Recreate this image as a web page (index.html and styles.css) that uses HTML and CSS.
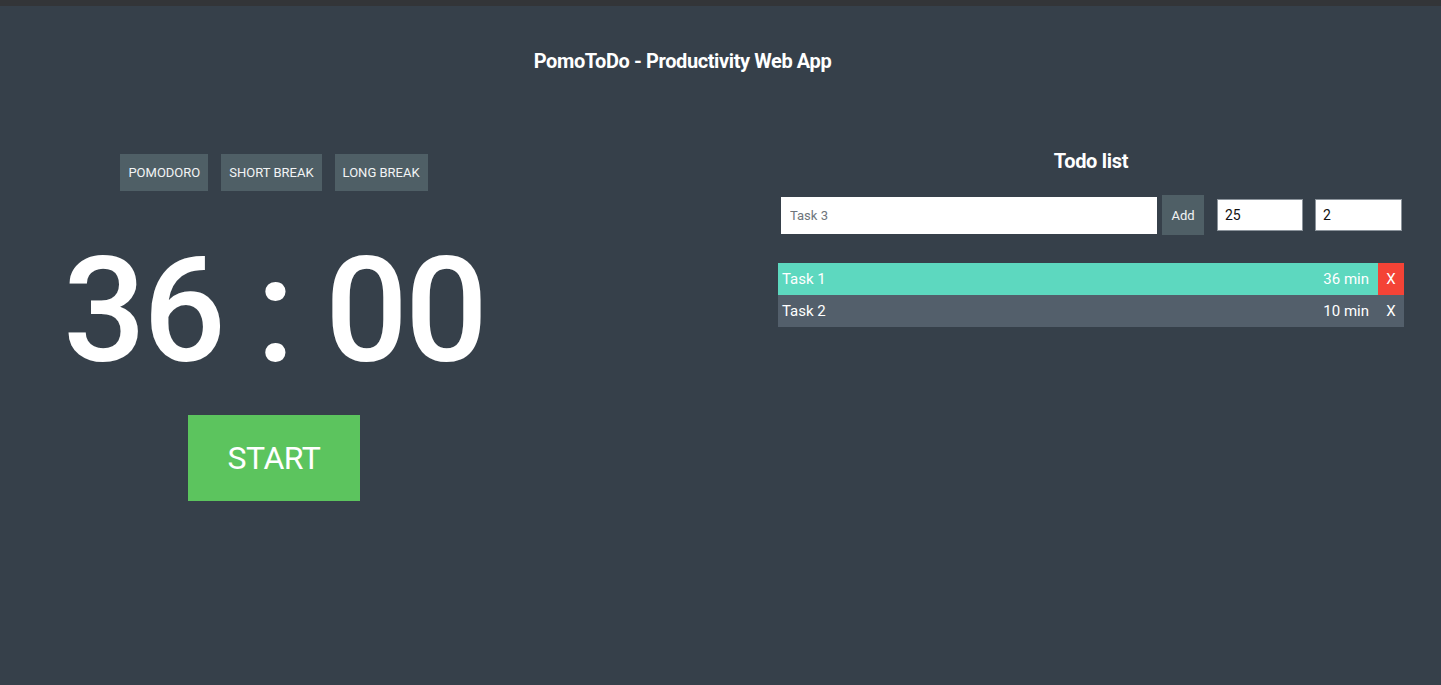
FILE: index.html
```html
<!DOCTYPE html>
<html lang="en">
<head>
<meta charset="utf-8">
<title>PomoToDo</title>
<link rel="stylesheet" href="styles.css">
</head>
<body>
<div class="topbar"></div>
<header class="header">
  <h1 class="title">PomoToDo - Productivity Web App</h1>
</header>
<main class="main">
  <section class="timer-col">
    <div class="modes">
      <button class="mode-btn">POMODORO</button>
      <button class="mode-btn">SHORT BREAK</button>
      <button class="mode-btn">LONG BREAK</button>
    </div>
    <div class="clock">36 : 00</div>
    <button class="start-btn">START</button>
  </section>
  <section class="todo-col">
    <h2 class="todo-title">Todo list</h2>
    <div class="add-row">
      <input class="task-input" type="text" placeholder="Task 3">
      <button class="add-btn">Add</button>
      <input class="num-input num-first" type="text" value="25">
      <input class="num-input" type="text" value="2">
    </div>
    <ul class="tasks">
      <li class="task task-active">
        <span class="task-name">Task 1</span>
        <span class="task-time">36 min</span>
        <span class="task-del task-del-active">X</span>
      </li>
      <li class="task">
        <span class="task-name">Task 2</span>
        <span class="task-time">10 min</span>
        <span class="task-del">X</span>
      </li>
    </ul>
  </section>
</main>
</body>
</html>
```
FILE: styles.css
```css
* { box-sizing: border-box; }
html, body {
  margin: 0;
  padding: 0;
  background: #36404a;
  height: 100%;
}
body {
  font-family: Roboto, "Liberation Sans", sans-serif;
  color: #ffffff;
  overflow: hidden;
}
.topbar {
  height: 6px;
  background: #333538;
}
.header {
  width: 1365px;
  display: flex;
  justify-content: center;
  padding-top: 43px;
}
.title {
  margin: 0;
  font-size: 20px;
  line-height: 24px;
  font-weight: 700;
  letter-spacing: -0.4px;
}
.main {
  display: flex;
  gap: 193px;
}
.timer-col {
  width: 548px;
  display: flex;
  flex-direction: column;
  align-items: center;
  padding-top: 81px;
}
.modes {
  display: flex;
  gap: 13px;
}
.mode-btn {
  height: 37px;
  padding: 0 8px;
  border: none;
  background: #4f5f66;
  color: #f2f4f5;
  font-family: inherit;
  font-size: 13px;
  font-weight: 400;
}
.clock {
  margin-top: 48px;
  font-size: 146px;
  line-height: 1;
  height: 146px;
  letter-spacing: -3px;
  font-weight: 500;
  color: #ffffff;
}
.start-btn {
  margin-top: 30px;
  width: 172px;
  height: 86px;
  border: none;
  background: #5cc45e;
  color: #ffffff;
  font-family: inherit;
  font-size: 32px;
  letter-spacing: -0.5px;
}
.todo-col {
  width: 700px;
  padding: 76px 37px 0;
  display: flex;
  flex-direction: column;
}
.todo-title {
  margin: 0;
  text-align: center;
  font-size: 20px;
  line-height: 24px;
  font-weight: 700;
  letter-spacing: -0.3px;
}
.add-row {
  margin-top: 22px;
  height: 40px;
  display: flex;
  align-items: center;
  padding-left: 3px;
}
.task-input {
  width: 376px;
  height: 37px;
  border: none;
  padding: 0 9px;
  font-family: inherit;
  font-size: 13px;
  color: #333;
  background: #fff;
}
.task-input::placeholder { color: #6e757b; }
.add-btn {
  margin-left: 5px;
  width: 42px;
  height: 40px;
  border: none;
  background: #4f5f66;
  color: #f2f4f5;
  font-family: inherit;
  font-size: 13px;
  padding: 0;
}
.num-input {
  margin-left: 12px;
  width: 87px;
  height: 32px;
  border: 1px solid #8b939b;
  padding: 0 7px;
  font-family: inherit;
  font-size: 14px;
  color: #111;
  background: #fff;
}
.num-first { margin-left: 13px; width: 86px; }
.tasks {
  list-style: none;
  margin: 28px 0 0;
  padding: 0;
}
.task {
  height: 32px;
  display: flex;
  align-items: center;
  background: #535f6b;
  font-size: 15px;
  color: #fff;
}
.task-active { background: #5dd8bf; }
.task-name {
  flex: 1;
  padding-left: 4px;
}
.task-time {
  padding-right: 9px;
}
.task-del {
  width: 26px;
  height: 32px;
  display: flex;
  align-items: center;
  justify-content: center;
}
.task-del-active { background: #f44336; }
```
